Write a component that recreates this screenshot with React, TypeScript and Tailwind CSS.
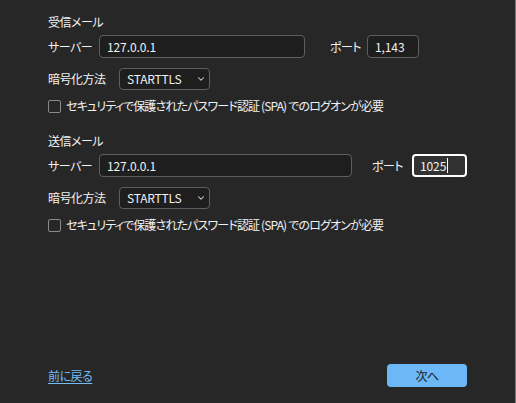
import { ChevronDown } from 'lucide-react'

function Field({ value, width, focused }: { value: string; width: string; focused?: boolean }) {
  if (focused) {
    return (
      <div className={`${width} h-[23px] rounded-[4px] border-2 border-white bg-[#323232] px-[6px] flex items-center tracking-[-0.1px]`}>
        <span>{value}</span>
        <span className="ml-[1px] h-[15px] w-px bg-white" />
      </div>
    )
  }
  return (
    <div className={`${width} h-[23px] rounded-[4px] border border-[#5e5e5e] bg-[#1e1e1e] px-[7px] flex items-center tracking-[-0.1px]`}>
      {value}
    </div>
  )
}

function Select() {
  return (
    <div className="w-[91px] h-[22px] rounded-[4px] border border-[#5e5e5e] bg-[#1e1e1e] pl-[7px] pr-[3px] flex items-center justify-between tracking-[-0.2px]">
      <span>STARTTLS</span>
      <ChevronDown size={10} strokeWidth={2.5} className="text-[#d8d8d8]" />
    </div>
  )
}

function Section({ title, serverWidth, portGap, portLabel, portWidth, port, focused, top }: {
  title: string
  serverWidth: string
  portGap: string
  portLabel: string
  portWidth: string
  port: string
  focused?: boolean
  top: string
}) {
  return (
    <div className={top}>
      <div className="h-4 leading-4">{title}</div>
      <div className="mt-[5px] flex items-center">
        <span className="w-[51px]">サーバー</span>
        <Field value="127.0.0.1" width={serverWidth} />
        <span className={`${portGap} ${portLabel}`}>ポート</span>
        <Field value={port} width={portWidth} focused={focused} />
      </div>
      <div className="mt-[10px] flex items-center">
        <span className="w-[71px]">暗号化方法</span>
        <Select />
      </div>
      <div className="mt-[8px] h-4 flex items-center gap-[5px]">
        <span className="w-[13px] h-[13px] rounded-[2px] border border-[#8a8a8a]" />
        <span className="tracking-[-0.85px]">セキュリティで保護されたパスワード認証 (SPA) でのログオンが必要</span>
      </div>
    </div>
  )
}

export default function App() {
  return (
    <div
      className="w-[516px] h-[403px] bg-[#272727] border-r border-[#767676] flex flex-col pl-12 pr-12 text-[12px] leading-4 tracking-[-0.5px] text-[#f2f2f2] [font-feature-settings:'palt']"
      style={{ fontFamily: '"Noto Sans CJK JP", "Noto Sans", sans-serif' }}
    >
      <Section
        title="受信メール"
        serverWidth="w-[206px]"
        portGap="ml-[25px]"
        portLabel="w-[37px]"
        portWidth="w-[52px]"
        port="1,143"
        top="mt-[14px]"
      />
      <Section
        title="送信メール"
        serverWidth="w-[253px]"
        portGap="ml-[20px]"
        portLabel="w-[40px]"
        portWidth="w-[55px]"
        port="1025"
        focused
        top="mt-[19px]"
      />
      <div className="mt-auto mb-[16px] flex items-center justify-between">
        <a href="#" className="text-[#72bdf7] underline underline-offset-2">前に戻る</a>
        <button className="w-[80px] h-[23px] rounded-[4px] bg-[#6cb8f6] text-[#1b1b1b]">次へ</button>
      </div>
    </div>
  )
}
